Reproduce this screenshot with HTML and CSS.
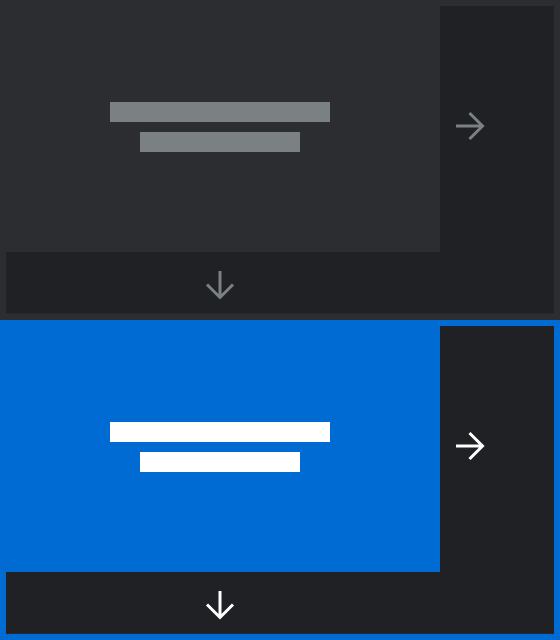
FILE: index.html
```html
<!DOCTYPE html>
<html lang="en">
<head>
  <meta charset="UTF-8">
  <title>Panels</title>
  <link rel="stylesheet" href="styles.css">
</head>
<body>

  <div class="panel">
    <div class="main">
      <div class="bar bar-long"></div>
      <div class="bar bar-short"></div>
    </div>
    <div class="side">
      <div class="icon-box">
        <svg class="arrow" viewBox="0 0 30 30" width="30" height="30"><path d="M1 15H27.5M14.5 2L27.5 15L14.5 28"/></svg>
      </div>
    </div>
    <div class="bottom">
      <div class="icon-box-wide">
        <svg class="arrow" viewBox="0 0 30 30" width="30" height="30"><path d="M15 1V27.5M2 14.5L15 27.5L28 14.5"/></svg>
      </div>
    </div>
  </div>

  <div class="panel active">
    <div class="main">
      <div class="bar bar-long"></div>
      <div class="bar bar-short"></div>
    </div>
    <div class="side">
      <div class="icon-box">
        <svg class="arrow" viewBox="0 0 30 30" width="30" height="30"><path d="M1 15H27.5M14.5 2L27.5 15L14.5 28"/></svg>
      </div>
    </div>
    <div class="bottom">
      <div class="icon-box-wide">
        <svg class="arrow" viewBox="0 0 30 30" width="30" height="30"><path d="M15 1V27.5M2 14.5L15 27.5L28 14.5"/></svg>
      </div>
    </div>
  </div>

</body>
</html>
```

FILE: styles.css
```css
* {
  box-sizing: border-box;
}

body {
  margin: 0;
  padding: 0;
  width: 560px;
  background: #2b2d31;
  font-family: 'Liberation Sans', sans-serif;
}

.panel {
  display: grid;
  grid-template-columns: 440px 114px 6px;
  grid-template-rows: 252px 62px 6px;
  height: 320px;
  background: #2b2d31;
  color: #7b8083;
}

.panel.active {
  background: #006bd2;
  color: #ffffff;
}

/* Main area with the two bars */
.main {
  grid-column: 1;
  grid-row: 1;
  display: flex;
  flex-direction: column;
  align-items: center;
  justify-content: center;
  gap: 10px;
  padding-top: 2px;
}

.bar {
  height: 20px;
  background: currentColor;
}

.bar-long {
  width: 220px;
}

.bar-short {
  width: 160px;
}

/* Right column */
.side {
  grid-column: 2;
  grid-row: 1;
  margin-top: 6px;
  background: #202124;
  display: flex;
  align-items: center;
  padding-bottom: 6px;
}

.icon-box {
  width: 60px;
  display: flex;
  justify-content: center;
}

/* Bottom bar */
.bottom {
  grid-column: 1 / 3;
  grid-row: 2;
  margin-left: 6px;
  background: #202124;
  border-bottom: 1px solid #26272b;
  display: flex;
  align-items: center;
  padding-top: 4px;
}

.icon-box-wide {
  width: 428px;
  display: flex;
  justify-content: center;
}

.arrow {
  display: block;
  fill: none;
  stroke: currentColor;
  stroke-width: 3;
  stroke-linecap: butt;
  stroke-linejoin: miter;
}
```
